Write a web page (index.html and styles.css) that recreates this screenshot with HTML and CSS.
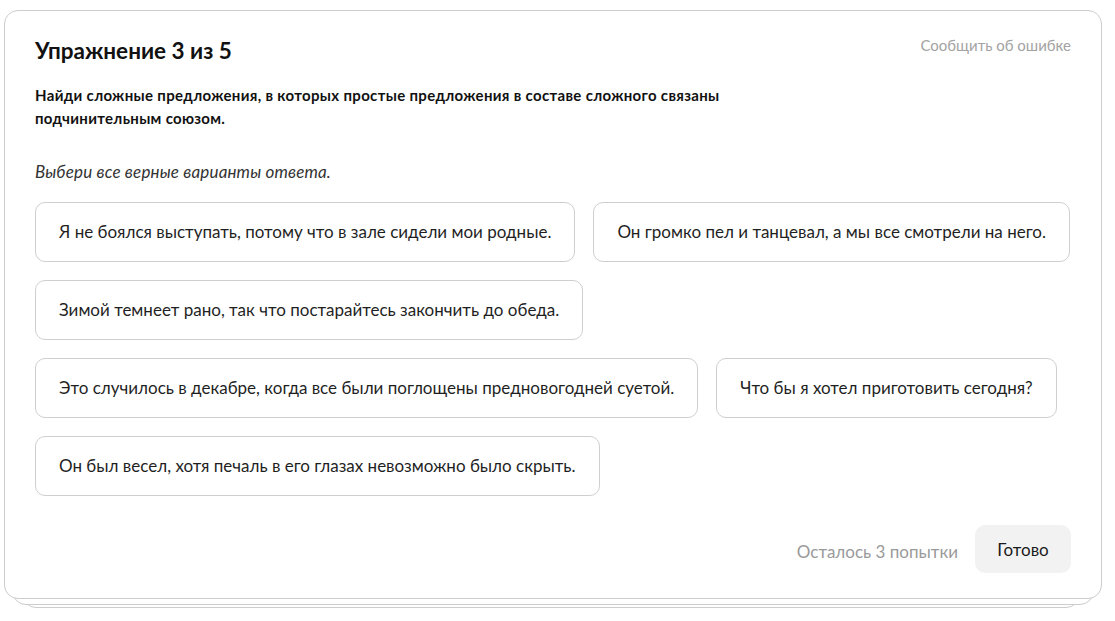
FILE: index.html
```html
<!DOCTYPE html>
<html lang="ru">
<head>
<meta charset="utf-8">
<title>Упражнение 3 из 5</title>
<link rel="stylesheet" href="styles.css">
</head>
<body>
<div class="stack">
  <div class="layer layer-3"></div>
  <div class="layer layer-2"></div>
  <section class="card">
    <header class="card-head">
      <h1 class="title">Упражнение 3 из 5</h1>
      <a class="report" href="#">Сообщить об ошибке</a>
    </header>
    <p class="task">Найди сложные предложения, в которых простые предложения в составе сложного связаны подчинительным союзом.</p>
    <p class="hint">Выбери все верные варианты ответа.</p>
    <div class="options">
      <div class="row">
        <button class="opt">Я не боялся выступать, потому что в зале сидели мои родные.</button>
        <button class="opt">Он громко пел и танцевал, а мы все смотрели на него.</button>
      </div>
      <div class="row">
        <button class="opt">Зимой темнеет рано, так что постарайтесь закончить до обеда.</button>
      </div>
      <div class="row">
        <button class="opt">Это случилось в декабре, когда все были поглощены предновогодней суетой.</button>
        <button class="opt">Что бы я хотел приготовить сегодня?</button>
      </div>
      <div class="row">
        <button class="opt">Он был весел, хотя печаль в его глазах невозможно было скрыть.</button>
      </div>
    </div>
    <footer class="card-foot">
      <span class="attempts">Осталось 3 попытки</span>
      <button class="done">Готово</button>
    </footer>
  </section>
</div>
</body>
</html>
```
FILE: styles.css
```css
* { box-sizing: border-box; }
html, body { margin: 0; background: #fff; }
body {
  font-family: Lato, "Noto Sans", sans-serif;
  color: #1a1a1a;
}
.stack {
  position: relative;
  margin: 10px 13px 0 4px;
  height: 600px;
}
.layer {
  position: absolute;
  border: 1px solid #cccccc;
  border-radius: 14px;
  background: #fff;
}
.layer-2 {
  left: 8px; right: 8px; top: 20px; height: 575px;
}
.layer-3 {
  left: 18px; right: 22px; top: 30px; height: 568px;
}
.card {
  position: relative;
  background: #fff;
  border: 1px solid #cccccc;
  border-radius: 14px;
  height: 589px;
  padding: 23px 30px 0 30px;
  display: flex;
  flex-direction: column;
}
.card-head {
  display: flex;
  justify-content: space-between;
  align-items: flex-start;
}
.title {
  margin: 0;
  font-size: 22.5px;
  font-weight: 700;
  line-height: 33px;
  color: #111;
}
.report {
  margin-top: 1px;
  font-size: 15px;
  color: #a3a3a3;
  text-decoration: none;
  line-height: 20px;
}
.task {
  margin: 17px 0 0 0;
  max-width: 700px;
  font-size: 15px;
  font-weight: 700;
  letter-spacing: 0.33px;
  line-height: 23px;
  color: #111;
}
.hint {
  margin: 30px 0 0 0;
  font-size: 17px;
  font-style: italic;
  letter-spacing: 0.15px;
  line-height: 24px;
  color: #333;
}
.options {
  margin-top: 18px;
  display: flex;
  flex-direction: column;
  gap: 18px;
}
.row {
  display: flex;
  gap: 18px;
}
.opt {
  height: 60px;
  padding: 0 23px 2px;
  border: 1px solid #cfcfcf;
  border-radius: 10px;
  background: #fff;
  font-family: inherit;
  font-size: 17px;
  color: #1f1f1f;
  white-space: nowrap;
  cursor: pointer;
}
.card-foot {
  margin-top: 29px;
  display: flex;
  justify-content: flex-end;
  align-items: center;
  gap: 17px;
}
.attempts {
  font-size: 17px;
  color: #9a9a9a;
  margin-top: 4px;
}
.done {
  width: 96px;
  height: 48px;
  border: none;
  border-radius: 10px;
  background: #f2f2f2;
  font-family: inherit;
  font-size: 17px;
  color: #1a1a1a;
  cursor: pointer;
}
```
